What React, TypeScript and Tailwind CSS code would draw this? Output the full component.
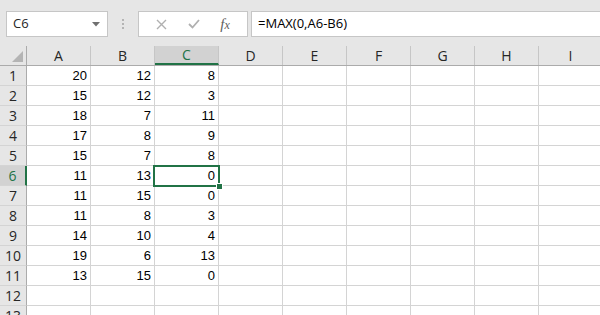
import React from 'react'

const colA = [20, 15, 18, 17, 15, 11, 11, 11, 14, 19, 13]
const colB = [12, 12, 7, 8, 7, 13, 15, 8, 10, 6, 15]
const colC = [8, 3, 11, 9, 8, 0, 0, 3, 4, 13, 0]
const letters = ['A', 'B', 'C', 'D', 'E', 'F', 'G', 'H', 'I']

function HeaderCell({ label, active }: { label: string; active?: boolean }) {
  return (
    <div
      className={
        'w-[64px] shrink-0 h-full flex items-center justify-center border-r border-[#c6c6c6] ' +
        (active ? 'bg-[#d2d2d2] text-[#217346] border-b-2 border-b-[#217346]' : 'text-[#262626]')
      }
    >
      {label}
    </div>
  )
}

function Row({ n }: { n: number }) {
  const i = n - 1
  const active = n === 6
  const vals = [colA[i], colB[i], colC[i]]
  return (
    <div className="flex h-[20px]">
      <div
        className={
          'w-[27px] shrink-0 flex items-center justify-center border-b border-[#d4d4d4] ' +
          (active
            ? 'bg-[#d2d2d2] text-[#217346] border-r-2 border-r-[#217346]'
            : 'bg-[#e6e6e6] text-[#262626] border-r border-r-[#ababab]')
        }
        style={{ fontFamily: '"Open Sans", sans-serif' }}
      >
        <span className="text-[14px]">{n}</span>
      </div>
      {letters.map((l, c) => (
        <div
          key={l}
          className="relative w-[64px] shrink-0 flex items-center justify-end pr-[3px] border-r border-b border-[#d4d4d4] bg-white text-[13px] text-black"
        >
          {c < 3 && vals[c] !== undefined ? vals[c] : ''}
          {active && c === 2 && (
            <div className="absolute z-10 -left-[2px] -top-[1px] w-[67px] h-[22px] border-2 border-[#217346]">
              <div className="absolute -right-[5px] -bottom-[5px] w-[7px] h-[7px] bg-[#217346] border border-white" />
            </div>
          )}
        </div>
      ))}
    </div>
  )
}

export default function App() {
  return (
    <div
      className="w-[600px] h-[315px] overflow-hidden bg-[#e6e6e6] flex flex-col"
      style={{ fontFamily: '"Liberation Sans", Arial, sans-serif' }}
    >
      {/* formula bar */}
      <div className="h-[46px] shrink-0 flex items-start pt-[11px] pl-[6px]" style={{ fontFamily: '"Open Sans", sans-serif' }}>
        <div className="w-[102px] h-[26px] bg-white border border-[#c6c6c6] flex items-center justify-between pl-[6px] pr-[7px] text-[13px] text-[#262626]">
          <span>C6</span>
          <svg width="8" height="5" viewBox="0 0 8 5">
            <path d="M0 0 L8 0 L4 4.5 Z" fill="#707070" />
          </svg>
        </div>
        <div className="w-[30px] h-[26px] flex flex-col items-center justify-center gap-[2px]">
          <div className="w-[2px] h-[2px] bg-[#b4b4b4]" />
          <div className="w-[2px] h-[2px] bg-[#b4b4b4]" />
          <div className="w-[2px] h-[2px] bg-[#b4b4b4]" />
        </div>
        <div className="w-[110px] h-[26px] bg-white border border-[#c6c6c6] flex items-center">
          <div className="w-[44px] flex justify-center">
            <svg width="11" height="11" viewBox="0 0 11 11">
              <path d="M1 1 L10 10 M10 1 L1 10" stroke="#b0b0b0" strokeWidth="1.4" />
            </svg>
          </div>
          <div className="w-[22px] flex justify-center">
            <svg width="12" height="10" viewBox="0 0 12 10">
              <path d="M1 5 L4.5 8.5 L11 1" stroke="#b0b0b0" strokeWidth="1.8" fill="none" />
            </svg>
          </div>
          <div
            className="flex-1 flex justify-center pr-[2px] text-[#5e5e5e] italic text-[15px]"
            style={{ fontFamily: '"Liberation Serif", serif' }}
          >
            <span>f</span>
            <span className="text-[12px] mt-[3px]">x</span>
          </div>
        </div>
        <div className="ml-[3px] flex-1 h-[26px] bg-white border-y border-l border-[#c6c6c6] flex items-center pl-[6px] text-[13px] text-black">
          =MAX(0,A6-B6)
        </div>
      </div>

      {/* column headers */}
      <div className="flex h-[20px] shrink-0 border-b border-[#ababab] text-[14px]" style={{ fontFamily: '"Open Sans", sans-serif' }}>
        <div className="w-[27px] shrink-0 h-full relative border-r border-[#ababab]">
          <svg className="absolute right-[3px] bottom-[3px]" width="11" height="11" viewBox="0 0 11 11">
            <path d="M11 0 L11 11 L0 11 Z" fill="#b4b4b4" />
          </svg>
        </div>
        {letters.map((l) => (
          <HeaderCell key={l} label={l} active={l === 'C'} />
        ))}
      </div>

      {/* rows */}
      <div className="flex flex-col">
        {Array.from({ length: 13 }, (_, k) => (
          <Row key={k} n={k + 1} />
        ))}
      </div>
    </div>
  )
}
